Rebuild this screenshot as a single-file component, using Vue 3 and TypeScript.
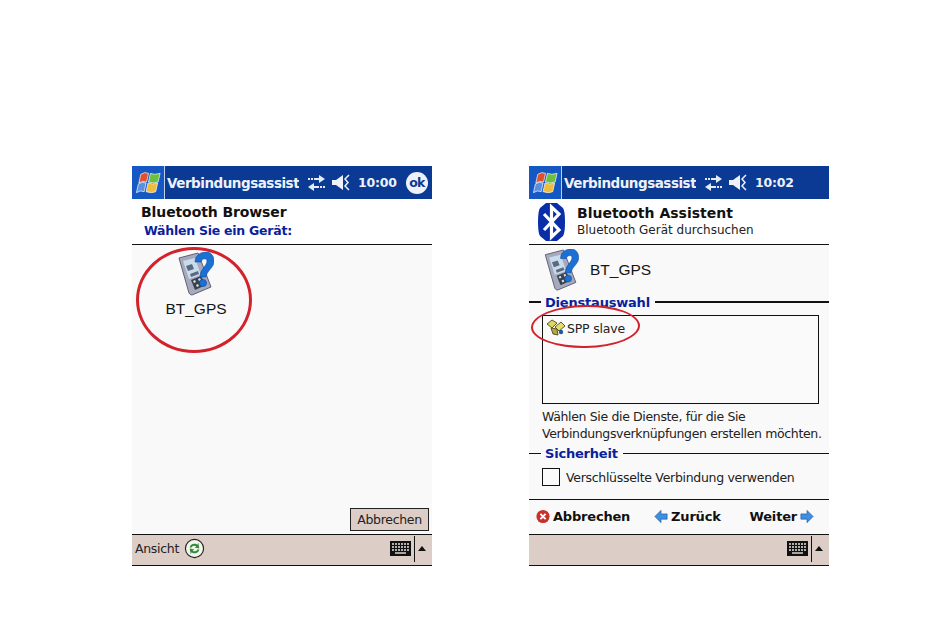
<template>
  <div class="page">
    <!-- left device screen -->
    <section class="screen">
      <header class="titlebar">
        <span class="start"><WinFlag /></span>
        <span class="title">Verbindungsassist</span>
        <span class="tray">
          <svg class="conn" viewBox="0 0 19 16"><path d="M7 3h5V0l6 4-6 4V5H7zM12 13H7v3L1 12l6-4v3h5z" fill="#e6ebf5" /><path d="M1 3h2v2H1zM4 3h2v2H4zM13 11h2v2h-2zM16 11h2v2h-2z" fill="#e6ebf5" /></svg>
          <svg class="speaker" viewBox="0 0 20 17"><path d="M0 6h4l7-5v15l-7-5H0z" fill="#eef2f8" /><path d="M17 1l-4 4 3 3.500-3 3.500 4 4" fill="none" stroke="#eef2f8" stroke-width="1.500" /></svg>
          <span class="clock">10:00</span>
          <span class="ok">ok</span>
        </span>
      </header>
      <div class="head-plain">
        <div class="head-title">Bluetooth Browser</div>
        <div class="head-sub">Wählen Sie ein Gerät:</div>
      </div>
      <main class="browser">
        <div class="device-wrap">
          <PhoneIcon class="device-icon" />
          <div class="device-name">BT_GPS</div>
          <span class="ring ring-big"></span>
        </div>
        <button class="cancel-btn">Abbrechen</button>
      </main>
      <footer class="menubar">
        <span class="menu-item">Ansicht</span>
        <svg class="sync" viewBox="0 0 22 22">
          <circle cx="11" cy="11" r="9.500" fill="#f2f6ec" stroke="#222" stroke-width="1.200" />
          <path d="M6 10a5 5 0 0 1 8-3l1-2 1 6-5-1 2-1a3 3 0 0 0-5 1z" fill="#2f8a3a" />
          <path d="M16 12a5 5 0 0 1-8 3l-1 2-1-6 5 1-2 1a3 3 0 0 0 5-1z" fill="#2f8a3a" />
        </svg>
        <span class="kbd-tray">
          <KeyboardIcon class="kbd" />
          <span class="kbd-sep"></span>
          <span class="kbd-arrow"></span>
        </span>
      </footer>
    </section>

    <!-- right device screen -->
    <section class="screen">
      <header class="titlebar">
        <span class="start"><WinFlag /></span>
        <span class="title">Verbindungsassist</span>
        <span class="tray">
          <svg class="conn" viewBox="0 0 19 16"><path d="M7 3h5V0l6 4-6 4V5H7zM12 13H7v3L1 12l6-4v3h5z" fill="#e6ebf5" /><path d="M1 3h2v2H1zM4 3h2v2H4zM13 11h2v2h-2zM16 11h2v2h-2z" fill="#e6ebf5" /></svg>
          <svg class="speaker" viewBox="0 0 20 17"><path d="M0 6h4l7-5v15l-7-5H0z" fill="#eef2f8" /><path d="M17 1l-4 4 3 3.500-3 3.500 4 4" fill="none" stroke="#eef2f8" stroke-width="1.500" /></svg>
          <span class="clock">10:02</span>
        </span>
      </header>
      <div class="head-bt">
        <svg class="bt-logo" viewBox="0 0 27 38">
          <path d="M8 0h11l6 5q2 3 2 14t-2 14l-6 5H8l-6-5Q0 30 0 19T2 5z" fill="#0a2ea8" />
          <path d="M6 11l15 16-7.500 7V4L21 11 6 27" fill="none" stroke="#fff" stroke-width="3.200" />
        </svg>
        <div>
          <div class="bt-title">Bluetooth Assistent</div>
          <div class="bt-sub">Bluetooth Gerät durchsuchen</div>
        </div>
      </div>
      <div class="device-row">
        <PhoneIcon class="device-icon-small" />
        <span class="device-name">BT_GPS</span>
      </div>
      <div class="legend legend-thick"><span>Dienstauswahl</span></div>
      <div class="service-box">
        <div class="service">
          <svg class="service-icon" viewBox="0 0 20 18">
            <path d="M1 5l5-4 5 3-5 5z" fill="#e0d65c" stroke="#4c4a20" stroke-width=".9" />
            <path d="M9 8l6-5 4 4-6 5z" fill="#e6dc6a" stroke="#4c4a20" stroke-width=".9" />
            <path d="M5 9l6 1 1 6-5-1z" fill="#b7a83c" stroke="#4c4a20" stroke-width=".9" />
            <circle cx="15" cy="13" r="2.200" fill="#1f5aa8" />
          </svg>
          <span>SPP slave</span>
        </div>
        <span class="ring ring-flat"></span>
      </div>
      <p class="hint">Wählen Sie die Dienste, für die Sie<br />Verbindungsverknüpfungen erstellen möchten.</p>
      <div class="legend"><span>Sicherheit</span></div>
      <label class="check-row">
        <span class="check"></span>
        <span>Verschlüsselte Verbindung verwenden</span>
      </label>
      <nav class="wizard">
        <span class="wiz-item">
          <svg class="wiz-icon" viewBox="0 0 16 16"><circle cx="8" cy="8" r="7.500" fill="#c8302c" /><path d="M5 5l6 6M11 5l-6 6" stroke="#fff" stroke-width="2.200" /></svg>
          Abbrechen
        </span>
        <span class="wiz-item wiz-back">
          <svg class="wiz-icon" viewBox="0 0 16 16"><path d="M1 8l7-7v4h7v6H8v4z" fill="#3f8fe0" stroke="#1d4f9a" stroke-width=".7" /></svg>
          Zurück
        </span>
        <span class="wiz-item">
          Weiter
          <svg class="wiz-icon" viewBox="0 0 16 16"><path d="M15 8L8 1v4H1v6h7v4z" fill="#3f8fe0" stroke="#1d4f9a" stroke-width=".7" /></svg>
        </span>
      </nav>
      <footer class="menubar">
        <span class="kbd-tray">
          <KeyboardIcon class="kbd" />
          <span class="kbd-sep"></span>
          <span class="kbd-arrow"></span>
        </span>
      </footer>
    </section>
  </div>
</template>

<script setup lang="ts">
import { h } from 'vue';

const WinFlag = () =>
  h('svg', { viewBox: '0 0 28 22', width: 27, height: 22 }, [
    h('path', { d: 'M6 2q4-3 8-1l-2 9q-4-2-8 1z', fill: '#e0502c', stroke: '#fff', 'stroke-width': 0.7 }),
    h('path', { d: 'M16 1q4 2 10 0l-2 9q-5 2-10 0z', fill: '#6cc03c', stroke: '#fff', 'stroke-width': 0.7 }),
    h('path', { d: 'M3.500 12q4-3 8-1l-2 9q-4-2-8 1z', fill: '#5a90e0', stroke: '#fff', 'stroke-width': 0.7 }),
    h('path', { d: 'M13.500 11q5 2 10 0l-2 9q-4 2-10 0z', fill: '#f0bc3c', stroke: '#fff', 'stroke-width': 0.7 }),
  ]);

const PhoneIcon = () =>
  h('svg', { viewBox: '0 0 36 44' }, [
    h('path', { d: 'M1 6l19-5 13 34-19 8q-2 0-3-2z', fill: '#a7a9bc', stroke: '#5e6074', 'stroke-width': 1 }),
    h('path', { d: 'M5 9l12-3 6 17-12 4z', fill: '#c8dcec' }),
    h('path', { d: 'M8 14l6-2 2 5-6 2zM12 22l8-3 1 3-8 3z', fill: '#5b6a80' }),
    h('path', { d: 'M13 28l10-4 5 9-11 5z', fill: '#38424f' }),
    h('path', { d: 'M15 29l2-1 1 2-2 1zM20 27l2-1 1 2-2 1zM18 33l2-1 1 2-2 1z', fill: '#d9dee6' }),
    h('path', {
      d: 'M17 10C17 3 23 0 28 0c5 0 8 4 8 9 0 7-7 9-8 16h-6c0-8 7-11 7-16 0-3-5-3-6 1z',
      fill: '#1b70d4',
      stroke: '#0f4aa0',
      'stroke-width': 0.6,
    }),
    h('circle', { cx: 25, cy: 31, r: 3.6, fill: '#1b70d4', stroke: '#0f4aa0', 'stroke-width': 0.6 }),
  ]);

const KeyboardIcon = () =>
  h('svg', { viewBox: '0 0 21 15', width: 21, height: 15 }, [
    h('rect', { width: 21, height: 15, fill: '#111' }),
    h('path', { d: 'M2 3h17M2 6h17M2 9h17', stroke: '#e8e4df', 'stroke-width': 1.4, 'stroke-dasharray': '2 1' }),
    h('path', { d: 'M5 12h11', stroke: '#e8e4df', 'stroke-width': 1.4 }),
  ]);
</script>

<style scoped>
.page {
  width: 950px;
  height: 643px;
  box-sizing: border-box;
  padding: 166px 0 0 132px;
  display: flex;
  gap: 97px;
  background: #fff;
  font-family: "DejaVu Sans", "Liberation Sans", sans-serif;
  color: #1a1a1a;
}
.screen {
  width: 300px;
  height: 400px;
  display: flex;
  flex-direction: column;
  background: #f9f9f9;
}
.titlebar {
  height: 33px;
  flex: none;
  display: flex;
  align-items: center;
  background: #0a3a94;
  color: #eef2f8;
}
.start {
  width: 33px;
  height: 33px;
  flex: none;
  display: flex;
  align-items: center;
  justify-content: center;
  background: #1558c4;
  border-right: 1px solid #bcd0ea;
  box-sizing: border-box;
}
.title {
  width: 134px;
  padding-left: 2px;
  box-sizing: border-box;
  overflow: hidden;
  white-space: nowrap;
  flex: none;
  font-size: 13.5px;
  font-weight: 700;
  letter-spacing: -.48px;
}
.tray {
  display: flex;
  align-items: center;
}
.conn {
  width: 19px;
  height: 16px;
  margin-left: 8px;
}
.speaker {
  width: 20px;
  height: 17px;
  margin-left: 6px;
}
.clock {
  font-size: 12.5px;
  font-weight: 700;
  margin-left: 6px;
  letter-spacing: -.2px;
}
.ok {
  width: 22px;
  height: 22px;
  margin-left: 9px;
  border-radius: 50%;
  background: #eef2f8;
  color: #0a3a94;
  font-size: 12.5px;
  font-weight: 700;
  line-height: 21px;
  text-align: center;
  letter-spacing: -.8px;
}
.head-plain {
  height: 46px;
  flex: none;
  box-sizing: border-box;
  padding: 4px 0 0 9px;
  background: #fff;
  border-bottom: 1px solid #111;
}
.head-title {
  font-size: 14px;
  font-weight: 600;
  line-height: 18px;
  letter-spacing: -.1px;
  color: #111;
}
.head-sub {
  font-size: 12.5px;
  font-weight: 700;
  line-height: 20px;
  padding-left: 3px;
  color: #0a1f9c;
  letter-spacing: -.25px;
}
.browser {
  flex: 1;
  position: relative;
  display: flex;
  flex-direction: column;
  align-items: flex-start;
  justify-content: space-between;
  padding: 7px 3px 3px 0;
  box-sizing: border-box;
}
.device-wrap {
  position: relative;
  margin-left: 33px;
  width: 62px;
  display: flex;
  flex-direction: column;
  align-items: center;
}
.device-icon {
  width: 36px;
  height: 44px;
}
.device-name {
  font-family: "Liberation Sans", Arial, sans-serif;
  font-size: 15.5px;
  color: #151515;
  white-space: nowrap;
}
.device-wrap .device-name {
  margin-top: 4px;
}
.ring {
  position: absolute;
  border: 3px solid #d2222c;
  border-radius: 50%;
  box-sizing: border-box;
  pointer-events: none;
}
.ring-big {
  left: -29px;
  top: -5px;
  width: 116px;
  height: 106px;
}
.cancel-btn {
  align-self: flex-end;
  width: 79px;
  height: 23px;
  padding: 0;
  background: #dccdc7;
  border: 1px solid #222;
  font: 12.5px "DejaVu Sans", sans-serif;
  color: #222;
  letter-spacing: -.3px;
}
.menubar {
  height: 32px;
  flex: none;
  box-sizing: border-box;
  display: flex;
  align-items: center;
  padding: 0 0 3px 3px;
  background: #dccdc7;
  border-top: 1px solid #111;
  border-bottom: 1px solid #111;
  margin-top: auto;
}
.menu-item {
  font-size: 12.5px;
  color: #222;
  letter-spacing: -.3px;
}
.sync {
  width: 21px;
  height: 21px;
  margin-left: 5px;
}
.kbd-tray {
  margin-left: auto;
  display: flex;
  align-items: center;
  height: 100%;
  padding-right: 6px;
}
.kbd-sep {
  width: 1px;
  height: 26px;
  margin: 0 3px;
  background: #111;
}
.kbd-arrow {
  width: 0;
  height: 0;
  border: 4px solid transparent;
  border-top: 0;
  border-bottom: 5px solid #111;
}
.head-bt {
  height: 46px;
  flex: none;
  box-sizing: border-box;
  display: flex;
  align-items: center;
  gap: 12px;
  padding-left: 9px;
  background: #fff;
  border-bottom: 1px solid #111;
}
.bt-logo {
  width: 27px;
  height: 38px;
  flex: none;
}
.bt-title {
  font-size: 14px;
  font-weight: 600;
  line-height: 17px;
  color: #111;
}
.bt-sub {
  font-size: 12px;
  line-height: 16px;
  color: #222;
}
.device-row {
  height: 50px;
  flex: none;
  display: flex;
  align-items: center;
  gap: 11px;
  padding-left: 15px;
  box-sizing: border-box;
}
.device-icon-small {
  width: 35px;
  height: 42px;
}
.legend {
  display: flex;
  align-items: center;
  flex: none;
  height: 14px;
  font-size: 13px;
  font-weight: 700;
  color: #0a1f9c;
  letter-spacing: -.2px;
}
.legend span {
  padding: 0 5px 0 16px;
  white-space: nowrap;
  background: linear-gradient(#111, #111) no-repeat 0 50% / 12px 1px;
}
.legend::after {
  content: "";
  flex: 1;
  height: 1px;
  background: #111;
}
.legend-thick::after {
  height: 2px;
}
.legend-thick span {
  background-size: 12px 2px;
}
.service-box {
  position: relative;
  flex: none;
  width: 277px;
  height: 89px;
  box-sizing: border-box;
  margin: 6px 0 0 13px;
  background: #fafafa;
  border: 1px solid #111;
}
.service {
  display: flex;
  align-items: center;
  gap: 1px;
  font-size: 12.5px;
  color: #222;
  padding: 3px 0 0 3px;
  letter-spacing: -.2px;
}
.service-icon {
  width: 20px;
  height: 18px;
}
.ring-flat {
  left: -12px;
  top: -11px;
  width: 109px;
  height: 43px;
  border-width: 2px;
  transform: rotate(-1deg);
}
.hint {
  margin: 4px 0 0 13px;
  font-size: 12.5px;
  line-height: 17px;
  color: #222;
  letter-spacing: -.35px;
  white-space: nowrap;
}
.screen > .legend:not(.legend-thick) {
  margin-top: 4px;
}
.check-row {
  flex: none;
  display: flex;
  align-items: center;
  gap: 6px;
  margin: 8px 0 0 13px;
  font-size: 12.5px;
  color: #222;
  letter-spacing: -.3px;
}
.check {
  width: 18px;
  height: 18px;
  box-sizing: border-box;
  border: 1px solid #111;
  background: #fafafa;
}
.wizard {
  flex: none;
  height: 34px;
  margin-top: 13px;
  box-sizing: border-box;
  display: flex;
  align-items: center;
  justify-content: space-between;
  padding: 0 15px 0 7px;
  border-top: 1px solid #111;
  font-size: 13px;
  font-weight: 700;
  color: #111;
  letter-spacing: -.2px;
}
.wiz-item {
  display: flex;
  align-items: center;
  gap: 3px;
}
.wiz-back {
  margin-right: 5px;
}
.wiz-icon {
  width: 14px;
  height: 15px;
}
</style>
